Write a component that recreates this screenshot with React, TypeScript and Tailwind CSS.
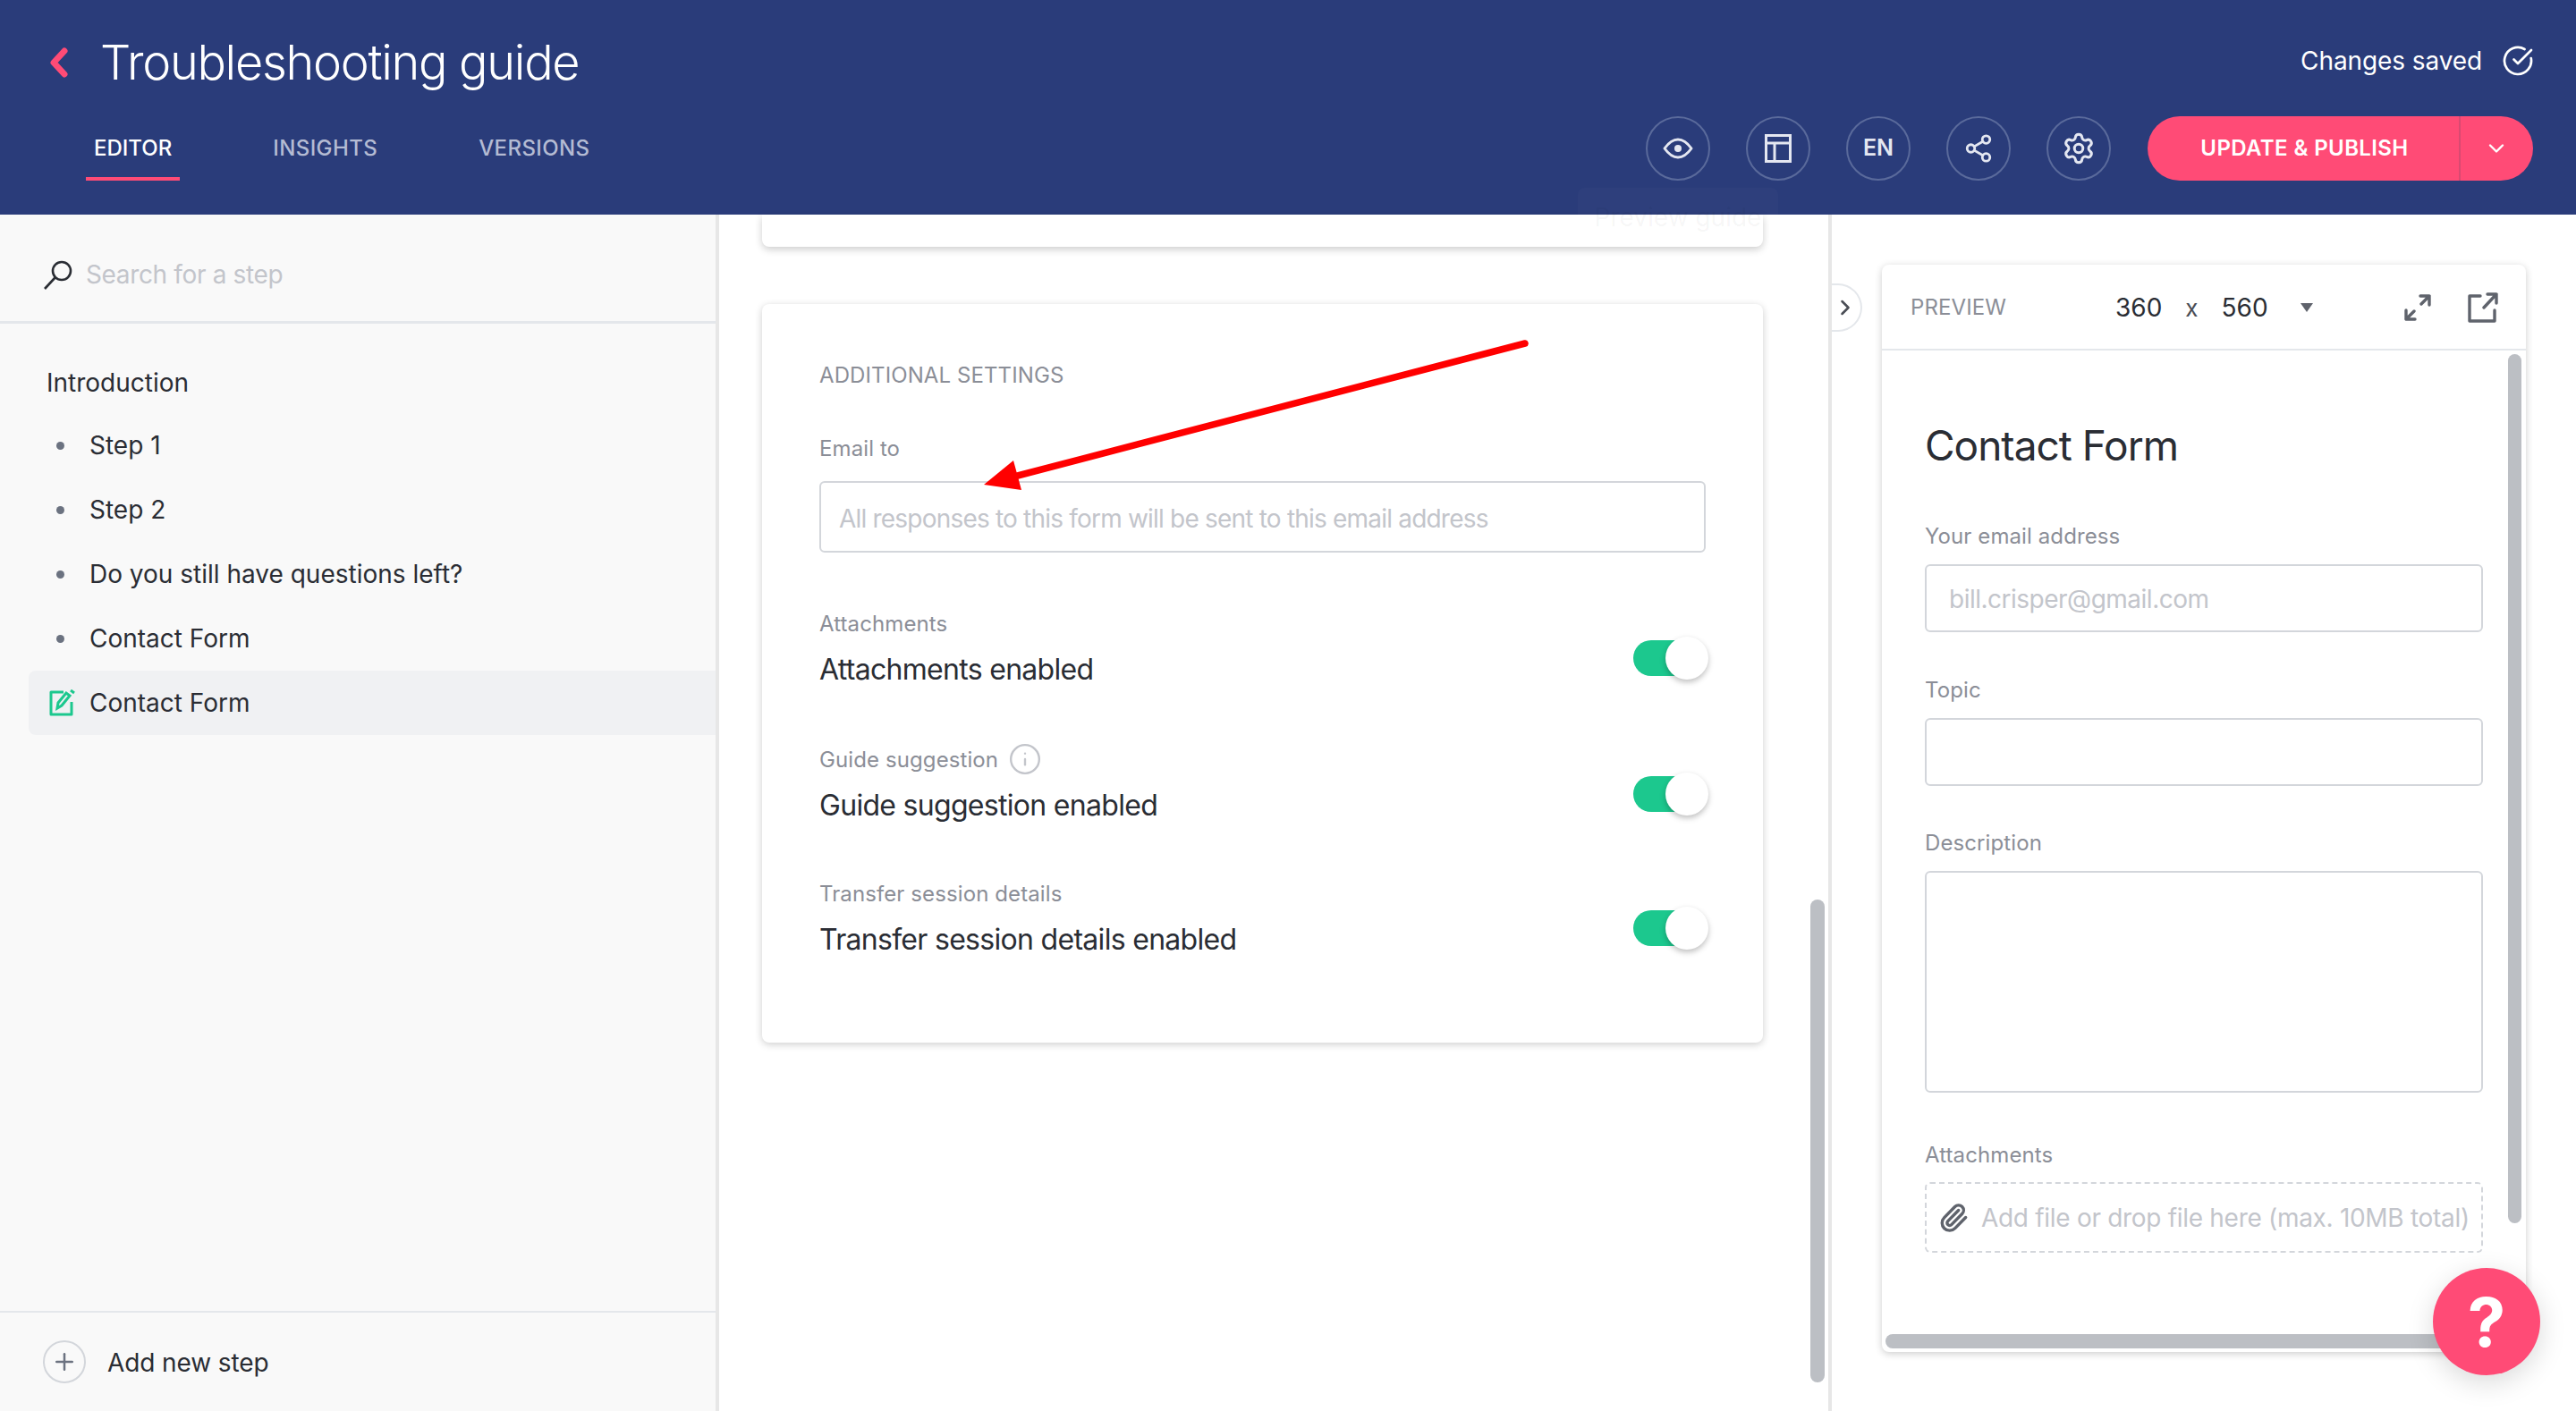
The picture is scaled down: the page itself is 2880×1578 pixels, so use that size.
import { ChevronDown, ChevronRight, CircleCheckBig, Info, Paperclip, Plus, Settings, Share2 } from "lucide-react";

const steps = ["Step 1", "Step 2", "Do you still have questions left?", "Contact Form"];

function Toggle() {
  return (
    <div className="relative w-[84px] h-[48px] mt-[30px]">
      <div className="w-[68px] h-[40px] mt-[4px] rounded-full bg-[#1cc88e]"></div>
      <div className="absolute right-0 top-0 w-[48px] h-[48px] rounded-full bg-white shadow-[0_3px_6px_rgba(0,0,0,0.25)]"></div>
    </div>
  );
}

function CircleButton({ children }: { children: React.ReactNode }) {
  return (
    <div className="w-[72px] h-[72px] rounded-full border-2 border-[#5a6a9b] flex items-center justify-center text-[#e4e7f1]">
      {children}
    </div>
  );
}

function Label({ children }: { children: React.ReactNode }) {
  return <div className="text-[24px] leading-[32px] tracking-[0.1px] text-[#8b8e97]">{children}</div>;
}

function App() {
  return (
    <div className="relative w-[2880px] h-[1578px] overflow-hidden flex flex-col bg-white text-[#2a2d34] font-['Inter',sans-serif]">
      {/* top bar */}
      <header className="h-[240px] bg-[#2a3c7a] flex justify-between shrink-0">
        <div className="flex flex-col">
          <div className="h-[140px] flex items-center pl-[55px]">
            <svg width="22" height="34" viewBox="0 0 22 34" fill="none">
              <path d="M17 4 5 17l12 13" stroke="#ff4b76" strokeWidth="7" strokeLinecap="round" strokeLinejoin="round" />
            </svg>
            <h1 className="ml-[35px] text-[54px] font-light leading-[64px] text-white tracking-[-1.3px]">Troubleshooting guide</h1>
          </div>
          <div className="flex pl-[96px] gap-[95px] text-[24px] font-medium leading-[32px]">
            <div className="h-[62px] px-[9px] pt-[10px] border-b-4 border-[#ff4b76] text-white">EDITOR</div>
            <div className="h-[62px] px-[9px] pt-[10px] tracking-[0.4px] text-[#b4bbd3]">INSIGHTS</div>
            <div className="h-[62px] px-[9px] pt-[10px] tracking-[0.4px] text-[#b4bbd3]">VERSIONS</div>
          </div>
        </div>
        <div className="flex flex-col items-end pr-[48px]">
          <div className="h-[130px] flex items-start pt-[52px] gap-[22px] text-[28px] leading-[32px] tracking-[-0.1px] text-white">
            <span>Changes saved</span>
            <CircleCheckBig size={36} strokeWidth={1.8} className="-mt-[2px] -mr-[1px]" />
          </div>
          <div className="flex items-center">
            <div className="flex gap-[40px] mr-[41px]">
              <CircleButton>
                <svg width="34" height="24" viewBox="0 0 34 24" fill="none" stroke="currentColor" strokeWidth="3">
                  <path d="M2 12C7 5 12 2 17 2s10 3 15 10c-5 7-10 10-15 10S7 19 2 12Z" strokeLinejoin="round" />
                  <circle cx="17" cy="12" r="4" fill="currentColor" stroke="none" />
                </svg>
              </CircleButton>
              <CircleButton>
                <svg width="30" height="32" viewBox="0 0 30 32" fill="none" stroke="currentColor" strokeWidth="3">
                  <rect x="1.5" y="1.5" width="27" height="29" />
                  <path d="M1.5 10h27M11 10v20.5" />
                </svg>
              </CircleButton>
              <CircleButton><span className="text-[25px] font-semibold">EN</span></CircleButton>
              <CircleButton><Share2 size={34} strokeWidth={2} /></CircleButton>
              <CircleButton><Settings size={38} strokeWidth={1.9} /></CircleButton>
            </div>
            <div className="w-[431px] h-[72px] rounded-full bg-[#ff4b76] flex items-center text-white">
              <div className="w-[348px] pl-[3px] text-center text-[24px] font-semibold tracking-[0.4px]">UPDATE &amp; PUBLISH</div>
              <div className="h-full border-l-2 border-[#d84a72]"></div>
              <div className="flex-1 flex justify-center pr-[2px]"><ChevronDown size={28} strokeWidth={2} /></div>
            </div>
          </div>
        </div>
      </header>

      <div className="flex-1 flex min-h-0">
        {/* steps sidebar */}
        <aside className="w-[804px] shrink-0 flex flex-col bg-[#f9f9f9] border-r-4 border-[#e7e7e7]">
          <div className="h-[122px] shrink-0 flex items-center pl-[48px] pt-[14px] border-b-[3px] border-[#e4e7eb]">
            <svg width="34" height="34" viewBox="0 0 34 34" fill="none" stroke="#2a2d34">
              <circle cx="21" cy="13" r="10" strokeWidth="2.6" />
              <path d="M14 20 2 33" strokeWidth="2.6" />
            </svg>
            <span className="ml-[14px] text-[28px] tracking-[-0.35px] text-[#c3c5cb]">Search for a step</span>
          </div>
          <div className="flex-1 pt-[30px] pl-[32px]">
            <div className="h-[70px] pl-[20px] pt-[2px] flex items-center text-[28px]">Introduction</div>
            {steps.map((step) => (
              <div key={step} className="h-[72px] flex items-center text-[28px]">
                <div className="w-[68px] pl-[31px]">
                  <div className="w-[9px] h-[9px] rounded-full bg-[#6b7280]"></div>
                </div>
                {step}
              </div>
            ))}
            <div className="h-[72px] flex items-center text-[28px] bg-[#f0f1f3] rounded-l-[8px]">
              <div className="w-[68px] pl-[23px]">
                <svg width="30" height="30" viewBox="0 0 30 30" fill="none" stroke="#1cc88e" strokeWidth="3">
                  <path d="M16 3H2v25h23V14" strokeLinejoin="round" />
                  <path d="M9 21l1-6 9-11 4 3-9 11-5 3ZM24 1l4 3" />
                </svg>
              </div>
              Contact Form
            </div>
          </div>
          <div className="h-[112px] shrink-0 border-t-[2px] border-[#e4e7eb] flex items-center pl-[48px]">
            <div className="w-[48px] h-[48px] rounded-full border-2 border-[#d3d6db] flex items-center justify-center text-[#6b7280]">
              <Plus size={30} strokeWidth={2} />
            </div>
            <span className="ml-[24px] pt-[1px] text-[28px] tracking-[-0.1px]">Add new step</span>
          </div>
        </aside>

        {/* editor */}
        <main className="relative w-[1244px] shrink-0 border-r-4 border-[#e7e7e7] pl-[48px]">
          <div className="w-[1119px] h-[36px] bg-white rounded-b-[8px] shadow-[0_3px_8px_rgba(0,0,0,0.2)]"></div>
          <section className="w-[1119px] h-[826px] mt-[64px] px-[64px] pt-[64px] rounded-[8px] bg-white shadow-[0_2px_8px_rgba(0,0,0,0.2)]">
            <div className="text-[24px] leading-[32px] tracking-[0.1px] text-[#8b8e97]">ADDITIONAL SETTINGS</div>
            <div className="mt-[50px]"><Label>Email to</Label></div>
            <div className="mt-[20px] w-[991px] h-[80px] pl-[20px] pt-[4px] flex items-center rounded-[6px] border-2 border-[#d3d6db] text-[28px] tracking-[-0.8px] text-[#c3c5cb]">
              All responses to this form will be sent to this email address
            </div>
            <div className="mt-[64px] w-[994px] flex justify-between items-start">
              <div>
                <Label>Attachments</Label>
                <div className="mt-[19px] text-[32px] leading-[32px] tracking-[-0.7px]">Attachments enabled</div>
              </div>
              <Toggle />
            </div>
            <div className="mt-[69px] w-[994px] flex justify-between items-start">
              <div>
                <div className="flex items-center gap-[11px] h-[32px]">
                  <Label>Guide suggestion</Label>
                  <Info size={38} strokeWidth={1.5} className="text-[#c3c5cb] -mt-[2px]" />
                </div>
                <div className="mt-[19px] text-[32px] leading-[32px] tracking-[-0.7px]">Guide suggestion enabled</div>
              </div>
              <Toggle />
            </div>
            <div className="mt-[67px] w-[994px] flex justify-between items-start">
              <div>
                <Label>Transfer session details</Label>
                <div className="mt-[19px] text-[32px] leading-[32px] tracking-[-0.7px]">Transfer session details enabled</div>
              </div>
              <Toggle />
            </div>
          </section>
          <div className="absolute left-[1220px] top-[766px] w-[16px] h-[540px] rounded-[8px] bg-[#bcbfc4]"></div>
        </main>

        {/* preview */}
        <div className="relative flex-1 pl-[56px] pt-[56px]">
          <div className="absolute left-0 top-[77px] w-[34px] h-[54px] rounded-r-full border-2 border-l-0 border-[#e4e7eb] bg-white flex items-center text-[#4a4d55]">
            <ChevronRight size={28} strokeWidth={2.2} className="ml-[1px]" />
          </div>
          <div className="relative w-[720px] h-[1216px] rounded-[8px] bg-white shadow-[0_2px_8px_rgba(0,0,0,0.2)]">
            <div className="h-[96px] flex items-center pt-[2px] border-b-2 border-[#e4e7eb]">
              <span className="ml-[32px] text-[24px] tracking-[0.1px] text-[#8b8e97]">PREVIEW</span>
              <span className="ml-[122px] text-[28px]">360</span>
              <span className="ml-[26px] text-[26px] text-[#4a4d55]">x</span>
              <span className="ml-[26px] text-[28px]">560</span>
              <svg width="14" height="10" viewBox="0 0 14 10" className="ml-[36px]"><path d="M0 0h14L7 10Z" fill="#5f636c" /></svg>
              <svg width="30" height="30" viewBox="0 0 30 30" fill="none" stroke="#5f636c" strokeWidth="3.4" strokeLinecap="round" strokeLinejoin="round" className="ml-[102px]">
                <path d="M18 2h10v10M28 2l-9 9M12 28H2V18M2 28l9-9" />
              </svg>
              <svg width="34" height="34" viewBox="0 0 34 34" fill="none" stroke="#5f636c" strokeWidth="3.4" strokeLinecap="round" strokeLinejoin="round" className="ml-[41px]">
                <path d="M14 4H2v28h28V20M22 2h10v10M32 2 18 17" />
              </svg>
            </div>
            <div className="px-[48px]">
              <h2 className="mt-[76px] text-[46px] leading-[60px] tracking-[-1px]">Contact Form</h2>
              <div className="mt-[56px]"><Label>Your email address</Label></div>
              <div className="mt-[15px] h-[76px] pl-[25px] pt-[2px] flex items-center rounded-[6px] border-2 border-[#d3d6db] text-[28px] tracking-[-0.5px] text-[#c3c5cb]">bill.crisper@gmail.com</div>
              <div className="mt-[49px]"><Label>Topic</Label></div>
              <div className="mt-[15px] h-[76px] rounded-[6px] border-2 border-[#d3d6db]"></div>
              <div className="mt-[48px]"><Label>Description</Label></div>
              <div className="mt-[15px] h-[248px] rounded-[6px] border-2 border-[#d3d6db]"></div>
              <div className="mt-[54px]"><Label>Attachments</Label></div>
              <div className="mt-[14px] h-[79px] pl-[13px] flex items-center rounded-[6px] border-2 border-dashed border-[#d3d6db] text-[28px] tracking-[-0.3px] text-[#c3c5cb]">
                <Paperclip size={34} strokeWidth={2.4} className="text-[#5f636c] shrink-0" />
                <span className="ml-[14px] whitespace-nowrap">Add file or drop file here (max. 10MB total)</span>
              </div>
            </div>
            <div className="absolute right-[5px] top-[100px] w-[15px] h-[972px] rounded-[8px] bg-[#bcbfc4]"></div>
            <div className="absolute left-[4px] bottom-[4px] w-[640px] h-[16px] rounded-[8px] bg-[#bcbfc4]"></div>
          </div>
        </div>
      </div>

      {/* arrow drawn over the page */}
      <svg className="absolute left-0 top-0 pointer-events-none" width="2880" height="1578" viewBox="0 0 2880 1578">
        <path d="M1705 384 1130 534" stroke="#ff0000" strokeWidth="7.5" strokeLinecap="round" />
        <path d="M1100 542 1133 515 1142 548Z" fill="#ff0000" />
      </svg>

      {/* tooltip fading out */}
      <div className="absolute left-[1764px] top-[210px] w-[224px] h-[66px] flex items-center justify-center rounded-[8px] bg-white/[0.02] text-[28px] text-black/[0.05]">
        Preview guide
      </div>

      <div className="absolute left-[2720px] top-[1418px] w-[120px] h-[120px] rounded-full bg-[#ff4b76] flex items-center justify-center text-white text-[76px] font-bold shadow-[0_8px_30px_rgba(0,0,0,0.15)]">
        ?
      </div>
    </div>
  );
}

export default App;
